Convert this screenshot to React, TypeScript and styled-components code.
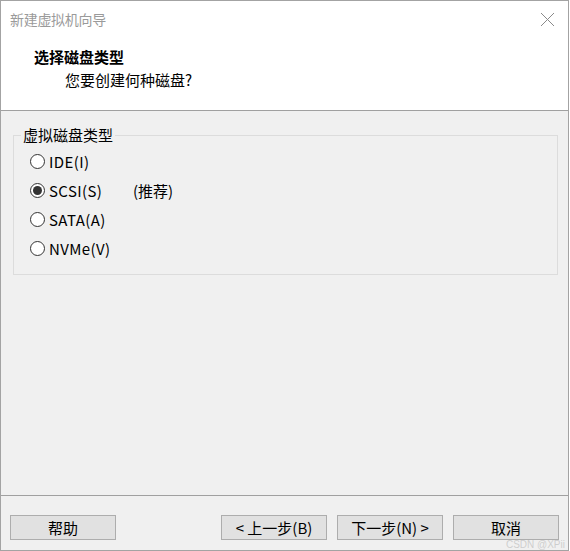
import React, { useState } from 'react';
import styled, { createGlobalStyle } from 'styled-components';

const GlobalStyle = createGlobalStyle`
  html, body {
    margin: 0;
    padding: 0;
    background: #ffffff;
  }
  body {
    font-family: "Noto Sans CJK SC", "Noto Sans", sans-serif;
    color: #000;
  }
`;

const Window = styled.div`
  position: relative;
  box-sizing: border-box;
  width: 569px;
  height: 551px;
  border: 1px solid #a3a3a3;
  display: flex;
  flex-direction: column;
  background: #f0f0f0;
`;

const Header = styled.div`
  height: 109px;
  background: #ffffff;
  border-bottom: 1px solid #a0a0a0;
  display: flex;
  flex-direction: column;
`;

const TitleBar = styled.div`
  height: 36px;
  display: flex;
  align-items: center;
  justify-content: space-between;
  padding: 0 13px 0 9px;
`;

const WindowTitle = styled.span`
  font-size: 14px;
  color: #9a9a9a;
  letter-spacing: -0.3px;
`;

const CloseButton = styled.button`
  border: none;
  background: transparent;
  padding: 0;
  width: 15px;
  height: 15px;
  display: flex;
  cursor: pointer;
`;

const Heading = styled.div`
  margin: 10px 0 0 33px;
  font-size: 15px;
  line-height: 20px;
  font-weight: bold;
`;

const SubHeading = styled.div`
  margin: 3px 0 0 64px;
  font-size: 15px;
  line-height: 20px;
`;

const Body = styled.div`
  flex: 1;
  padding: 16px 10px 0 12px;
`;

const GroupBox = styled.fieldset`
  margin: 0;
  padding: 4px 0 11px 0;
  border: 1px solid #dcdcdc;
  min-inline-size: 0;
`;

const GroupTitle = styled.legend`
  margin-left: 7px;
  padding: 0 2px;
  font-size: 15px;
  line-height: 16px;
`;

const OptionRow = styled.label`
  display: flex;
  align-items: center;
  height: 29px;
  padding-left: 16px;
  font-size: 15px;
  cursor: default;
`;

const RadioCircle = styled.span<{ $checked: boolean }>`
  box-sizing: border-box;
  width: 15px;
  height: 15px;
  border-radius: 50%;
  border: 1px solid #333333;
  background: #ffffff;
  display: flex;
  align-items: center;
  justify-content: center;
  margin-right: 4px;

  &::after {
    content: '';
    width: 9px;
    height: 9px;
    border-radius: 50%;
    background: ${p => (p.$checked ? '#333333' : 'transparent')};
  }
`;

const HiddenInput = styled.input`
  display: none;
`;

const OptionText = styled.span`
  width: 84px;
  letter-spacing: 0.4px;
`;

const Hint = styled.span``;

const Footer = styled.div`
  height: 55px;
  box-sizing: border-box;
  border-top: 1px solid #a0a0a0;
  display: flex;
  align-items: flex-start;
  padding: 19px 9px 0 9px;
`;

const Spacer = styled.div`
  flex: 1;
`;

const NavGroup = styled.div`
  display: flex;
  gap: 10px;
`;

const DialogButton = styled.button`
  box-sizing: border-box;
  width: 106px;
  height: 25px;
  background: #e1e1e1;
  border: 1px solid #adadad;
  font-family: "Noto Sans CJK SC", "Noto Sans", sans-serif;
  font-size: 15px;
  line-height: 20px;
  color: #000;
  padding: 0;
  cursor: pointer;
`;

const Watermark = styled.span`
  position: absolute;
  right: 3px;
  bottom: 0;
  font-family: "Liberation Sans", sans-serif;
  font-size: 10px;
  line-height: 10px;
  color: rgba(190, 190, 190, 0.7);
  pointer-events: none;
`;

const options = [
  { id: 'ide', label: 'IDE(I)' },
  { id: 'scsi', label: 'SCSI(S)', hint: '(推荐)' },
  { id: 'sata', label: 'SATA(A)' },
  { id: 'nvme', label: 'NVMe(V)' },
];

const App: React.FC = () => {
  const [selected, setSelected] = useState('scsi');

  return (
    <>
      <GlobalStyle />
      <Window>
        <Header>
          <TitleBar>
            <WindowTitle>新建虚拟机向导</WindowTitle>
            <CloseButton aria-label="关闭">
              <svg width="15" height="15" viewBox="0 0 15 15">
                <path d="M1 1 L14 14 M14 1 L1 14" stroke="#8a8a8a" strokeWidth="1" fill="none" />
              </svg>
            </CloseButton>
          </TitleBar>
          <Heading>选择磁盘类型</Heading>
          <SubHeading>您要创建何种磁盘?</SubHeading>
        </Header>
        <Body>
          <GroupBox>
            <GroupTitle>虚拟磁盘类型</GroupTitle>
            {options.map(o => (
              <OptionRow key={o.id}>
                <HiddenInput
                  type="radio"
                  name="disk"
                  checked={selected === o.id}
                  onChange={() => setSelected(o.id)}
                />
                <RadioCircle $checked={selected === o.id} />
                <OptionText>{o.label}</OptionText>
                {o.hint && <Hint>{o.hint}</Hint>}
              </OptionRow>
            ))}
          </GroupBox>
        </Body>
        <Footer>
          <DialogButton>帮助</DialogButton>
          <Spacer />
          <NavGroup>
            <DialogButton>&lt; 上一步(B)</DialogButton>
            <DialogButton>下一步(N) &gt;</DialogButton>
            <DialogButton>取消</DialogButton>
          </NavGroup>
        </Footer>
        <Watermark>CSDN @XPii</Watermark>
      </Window>
    </>
  );
};

export default App;
